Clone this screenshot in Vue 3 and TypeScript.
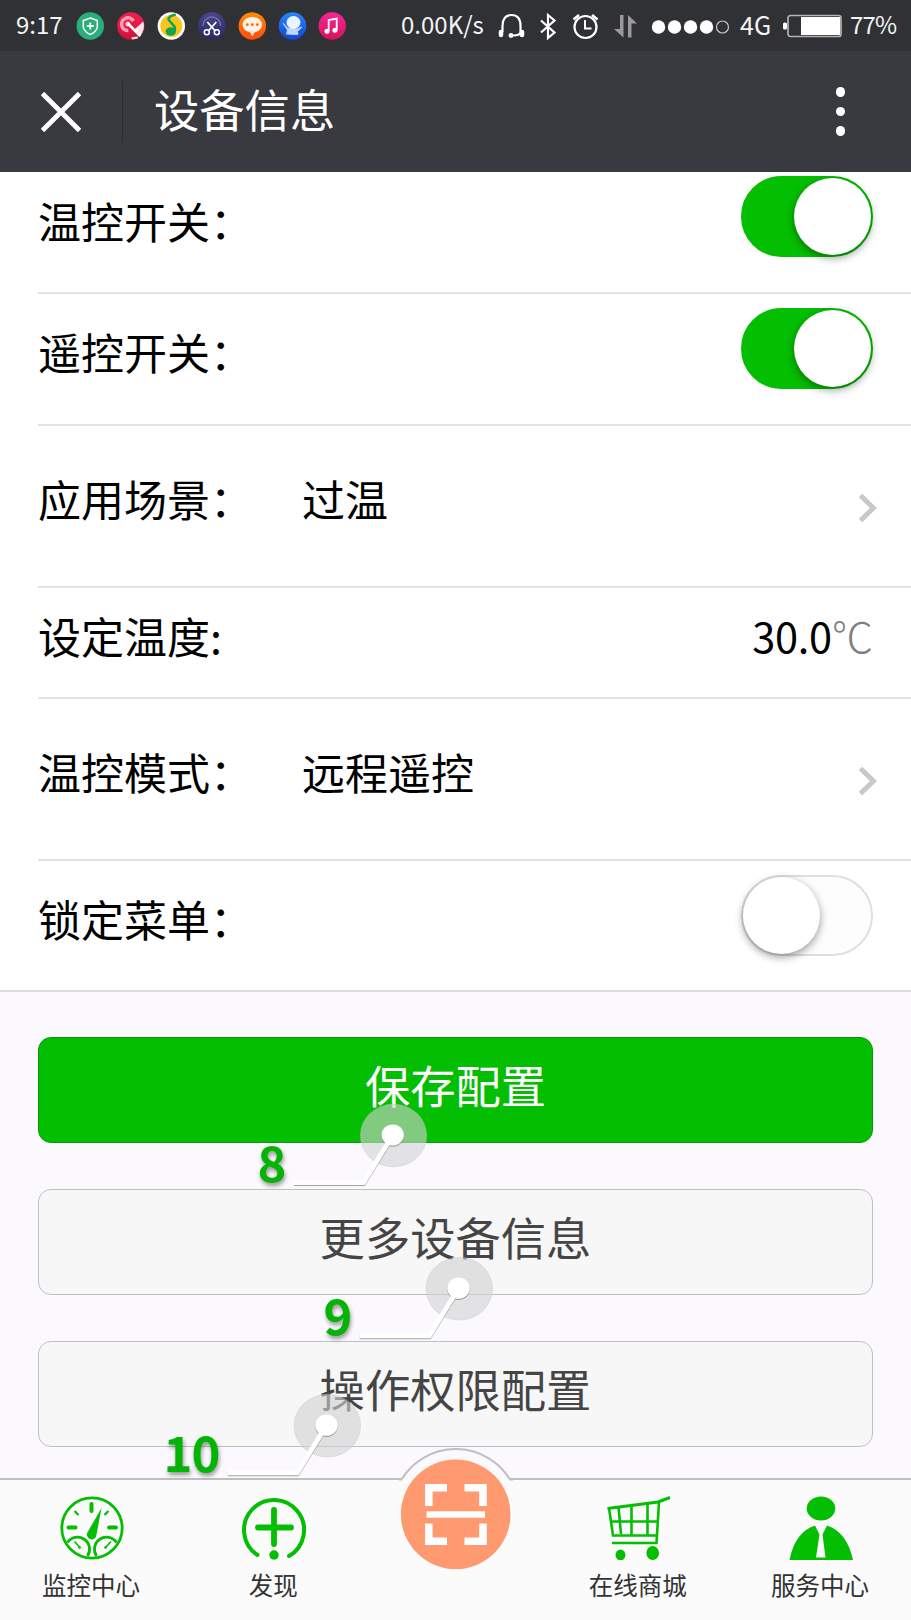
<script setup lang="ts">
import { ref } from 'vue'

interface Row {
  label: string
  height: number
  kind: 'toggle' | 'link' | 'temp'
  value?: string
  on?: boolean
}

const rows = ref<Row[]>([
  { label: '温控开关：', height: 122, kind: 'toggle', on: true },
  { label: '遥控开关：', height: 132, kind: 'toggle', on: true },
  { label: '应用场景：', height: 162, kind: 'link', value: '过温' },
  { label: '设定温度:', height: 111, kind: 'temp', value: '30.0' },
  { label: '温控模式：', height: 162, kind: 'link', value: '远程遥控' },
  { label: '锁定菜单：', height: 129, kind: 'toggle', on: false },
])

const buttons = [
  { text: '保存配置', primary: true },
  { text: '更多设备信息', primary: false },
  { text: '操作权限配置', primary: false },
]

const callouts = [
  { n: '8', x: 393.5, y: 1135.5 },
  { n: '9', x: 459.3, y: 1288.7 },
  { n: '10', x: 327.3, y: 1425.7 },
]

function toggle(row: Row) {
  row.on = !row.on
}
</script>

<template>
  <div class="screen">
    <div class="status">
      <span class="time">9:17</span>
      <svg class="apps" width="270" height="28" viewBox="0 0 270 28">
        <defs>
          <linearGradient id="gRed" x1="0" y1="0" x2="0" y2="1"><stop offset="0" stop-color="#f01f54" /><stop offset="1" stop-color="#cf1238" /></linearGradient>
          <linearGradient id="gOrange" x1="0" y1="0" x2="0" y2="1"><stop offset="0" stop-color="#ff8a0c" /><stop offset="1" stop-color="#ff4d0a" /></linearGradient>
          <linearGradient id="gBlue" x1="0" y1="0" x2="0" y2="1"><stop offset="0" stop-color="#2388ff" /><stop offset="1" stop-color="#1444d6" /></linearGradient>
          <linearGradient id="gPink" x1="0" y1="0" x2="0" y2="1"><stop offset="0" stop-color="#fb2596" /><stop offset="1" stop-color="#d3145c" /></linearGradient>
          <linearGradient id="gNavy" x1="0" y1="0" x2="0" y2="1"><stop offset="0" stop-color="#4a4690" /><stop offset="1" stop-color="#2a2760" /></linearGradient>
        </defs>
        <g transform="translate(14.3 14)">
          <circle r="13.7" fill="#2aaf7b" />
          <path d="M0-8 7-5.500V1Q6.500 5.500 0 8.500-6.500 5.500-7 1V-5.500Z" fill="none" stroke="#fff" stroke-width="1.500" />
          <path d="M-3.500 0H3.500M0-3.500V3.500" stroke="#fff" stroke-width="1.800" />
        </g>
        <g transform="translate(54.8 14)">
          <circle r="13.7" fill="url(#gRed)" />
          <path d="M-2.500 4.500A6.300 6.300 0 1 1 2.500-5" fill="none" stroke="#ff9bb0" stroke-width="3.600" />
          <circle cx="-3" cy="-2" r="2.500" fill="#ffc3cf" />
          <path d="M3.500 3.500 12.500-4.500Q15 3 9 10.500Z" fill="#ffe4e9" />
          <path d="M-3-2.500 9.500 10" stroke="#fff" stroke-width="2.600" />
          <path d="M1 12.300 7 11.500" stroke="#ffdbe2" stroke-width="2.200" />
        </g>
        <g transform="translate(95.3 14)">
          <circle r="13.7" fill="#fff" />
          <circle r="11" fill="#fdc41c" />
          <ellipse cx="-.5" cy="5.500" rx="5.200" ry="4.200" fill="#12a34c" />
          <path d="M3.500 5V1L-2.500-6Q-3.500-10 4.500-11.500" fill="none" stroke="#12a34c" stroke-width="2.600" />
        </g>
        <g transform="translate(135.8 14)">
          <circle r="13.7" fill="url(#gNavy)" />
          <path d="M-9 0A9 9 0 0 1 9 0" fill="none" stroke="#76739f" stroke-width="1.400" />
          <path d="M-4.500-4 3.500 5M4.500-4-3.500 5" stroke="#fff" stroke-width="1.800" />
          <circle cx="-5" cy="6.300" r="2.500" fill="none" stroke="#fff" stroke-width="1.500" />
          <circle cx="5" cy="6.300" r="2.500" fill="none" stroke="#fff" stroke-width="1.500" />
        </g>
        <g transform="translate(176.3 14)">
          <circle r="13.7" fill="url(#gOrange)" />
          <ellipse cy="-1.300" rx="9.700" ry="7.800" fill="#fff1e6" />
          <path d="M-3 5H3L0 10.500Z" fill="#ffe0cc" />
          <circle cx="-5" cy="-1.300" r="1.400" fill="#ff6a0c" /><circle cy="-1.300" r="1.400" fill="#ff6a0c" /><circle cx="5" cy="-1.300" r="1.400" fill="#ff6a0c" />
        </g>
        <g transform="translate(216.500 14)">
          <circle r="13.7" fill="url(#gBlue)" />
          <path d="M-9.500-3-5 2 4 3 9.500 1 5 5.500 5.500 8.500-6 8-5 4Z" fill="#bcd7fb" stroke="#bcd7fb" />
          <ellipse cx="1" cy="-3.500" rx="7" ry="6.500" fill="#eaf4ff" />
        </g>
        <g transform="translate(256.200 14)">
          <circle r="13.7" fill="url(#gPink)" />
          <path d="M-3.500 5V-6L4.500-7.500V4" fill="none" stroke="#fff" stroke-width="1.800" />
          <circle cx="-5.200" cy="5.300" r="2.500" fill="#fff" /><circle cx="2.700" cy="4.300" r="2.500" fill="#fff" />
        </g>
      </svg>
      <span class="speed">0.00K/s</span>
      <svg class="sys" width="242" height="28" viewBox="498 11 242 28">
        <g fill="none" stroke="#fff">
          <path d="M502.500 31V25Q502.500 14 511.500 14T520.500 25V31Q520.500 34.500 513 34.500" stroke-width="2.200" />
          <path d="M501 31V34M522 31V34" stroke-width="4.500" stroke-linecap="round" />
          <path d="M541 19.500 554.500 31.500 548 37V14L554.500 19.500 541 31.500" stroke-width="2.200" />
          <circle cx="585.500" cy="26" r="11" stroke-width="2.200" />
          <path d="M585 19V27.500H591.500" stroke-width="2" />
          <path d="M573.500 18.500 579 14M597.500 18.500 592 14" stroke-width="2.600" />
        </g>
        <circle cx="511" cy="34.500" r="2.400" fill="#fff" />
        <path d="M620 14H623.500V36.500L614 28H620ZM628 36.500H631.500V22.500H637L628 14Z" fill="#9a9a9c" />
        <g fill="#fff"><circle cx="658.500" cy="26" r="6.700" /><circle cx="674.500" cy="26" r="6.700" /><circle cx="690.500" cy="26" r="6.700" /><circle cx="706.500" cy="26" r="6.700" /></g>
        <circle cx="722.500" cy="26" r="6" fill="none" stroke="#c8c8c8" stroke-width="1.200" />
      </svg>
      <span class="net">4G</span>
      <svg class="battery" width="60" height="24" viewBox="0 0 60 24">
        <rect x="0" y="8.500" width="4" height="7" rx="1.500" fill="#fff" />
        <rect x="5" y="1.500" width="53" height="21" rx="2.500" fill="none" stroke="#b4b5b0" stroke-width="1.700" />
        <rect x="18" y="3" width="39" height="18" fill="#fff" />
      </svg>
      <span class="pct">77%</span>
    </div>

    <header class="header">
      <svg class="close" width="40" height="40" viewBox="0 0 40 40"><path d="M1.500 1.500 38.500 38.500M38.500 1.500 1.500 38.500" stroke="#fff" stroke-width="4.800" /></svg>
      <i class="sep"></i>
      <h1 class="title">设备信息</h1>
      <span class="more"><i></i><i></i><i></i></span>
    </header>

    <section class="list">
      <div v-for="row in rows" :key="row.label" class="row" :class="row.kind" :style="{ height: row.height + 'px' }">
        <span class="label">{{ row.label }}</span>
        <span v-if="row.kind === 'link'" class="value">{{ row.value }}</span>
        <svg v-if="row.kind === 'link'" class="arrow" width="18" height="28" viewBox="0 0 18 28"><path d="M1.500 1.500 14.500 14 1.500 26.500" fill="none" stroke="#c8c8cd" stroke-width="4.900" /></svg>
        <span v-if="row.kind === 'temp'" class="temp-value">{{ row.value }}<em>℃</em></span>
        <button v-if="row.kind === 'toggle'" class="switch" :class="{ on: row.on }" @click="toggle(row)"><i></i></button>
      </div>
    </section>

    <main class="actions">
      <button v-for="b in buttons" :key="b.text" class="btn" :class="{ primary: b.primary }">{{ b.text }}</button>
    </main>

    <nav class="tabs">
      <div class="tab">
        <svg width="64" height="64" viewBox="0 0 64 64" fill="none" stroke="#04be02">
          <circle cx="32" cy="32" r="30.200" stroke-width="2.800" />
          <path d="M31.500 8V15M8.500 31.500H15.500M49 31.500H56" stroke-width="4" stroke-linecap="round" />
          <path d="M14.500 15 18.500 19M48.500 15 44.500 19" stroke-width="2.300" />
          <path d="M41.500 12 36.500 38.500A4.800 4.800 0 1 1 28 35.500Z" fill="#04be02" stroke="none" />
          <path d="M7.500 46.500A11.500 11.500 0 1 1 27.500 60M56.500 46.500A11.500 11.500 0 1 0 36.500 60" stroke-width="2.800" />
          <path d="M14.500 45.500 20.500 52M51 45.500 45 52" stroke-width="1.700" />
          <circle cx="19.500" cy="51.500" r="1" /><circle cx="45.500" cy="51.500" r="1" />
        </svg>
        <span>监控中心</span>
      </div>
      <div class="tab">
        <svg width="64" height="64" viewBox="0 0 64 64" fill="none" stroke="#04be02" stroke-linecap="round">
          <path d="M15.500 59A30 30 0 1 1 47 60" stroke-width="4" />
          <path d="M32 14V48M16 31.500H49" stroke-width="5.800" />
          <circle cx="32" cy="59" r="4.700" fill="#04be02" stroke="none" />
        </svg>
        <span>发现</span>
      </div>
      <div class="tab scan">
        <svg width="130" height="126" viewBox="391 1446 130 126">
          <path d="M401.500 1481A63.500 63.500 0 0 1 510 1481V1485H401.500Z" fill="#fbf9fe" />
          <path d="M399 1479.500H401.500A63.600 63.600 0 0 1 510 1479.500H513" fill="none" stroke="#bfbfbf" stroke-width="2" />
          <path d="M402.500 1479H509V1483H402.500Z" fill="#fff" />
          <circle cx="455.700" cy="1514.300" r="54.800" fill="#ff9a70" />
          <g fill="none" stroke="#fff" stroke-width="7.600">
            <path d="M428.800 1506V1487.800H447M464.500 1487.800H483V1506M428.800 1523.500V1541.200H447M464.500 1541.200H483V1523.500" />
            <path d="M426.500 1514.500H485" stroke-width="6.500" />
          </g>
        </svg>
      </div>
      <div class="tab">
        <svg width="64" height="64" viewBox="0 0 64 64" fill="none" stroke="#04be02">
          <path d="M.500 12.500 51 6 63 1.500" stroke-width="3" />
          <path d="M2 12 6 39.500H50M3 25.500H51" stroke-width="2.600" />
          <path d="M11.500 11 14 38M24.500 10V39M40.500 8V39M52 6 49.500 47H5" stroke-width="2.600" />
          <ellipse cx="13.500" cy="59" rx="5" ry="5.400" fill="#04be02" stroke="none" />
          <ellipse cx="45.700" cy="57" rx="6.300" ry="7" fill="#04be02" stroke="none" />
        </svg>
        <span>在线商城</span>
      </div>
      <div class="tab">
        <svg width="64" height="64" viewBox="0 0 64 64" fill="#04be02">
          <ellipse cx="32" cy="12.500" rx="14.300" ry="12" />
          <path d="M.500 64Q6 36 26 29.500L30.500 38.500 27 61.500H36.500L33.500 38.500 38 29.500Q58 36 64 64Z" />
        </svg>
        <span>服务中心</span>
      </div>
    </nav>

    <svg class="callouts" width="911" height="1620" viewBox="0 0 911 1620">
      <g v-for="c in callouts" :key="c.n" :transform="`translate(${c.x} ${c.y})`">
        <ellipse class="halo" rx="33.300" ry="31.400" />
        <g class="pointer">
          <path d="M-99.500 47H-30L-1 0" />
          <ellipse cx="-.8" cy="-.5" rx="11.200" ry="10.600" />
        </g>
        <text class="num" x="-108" y="46.500" text-anchor="end">{{ c.n }}</text>
      </g>
    </svg>
  </div>
</template>

<style>
body {
  margin: 0;
  background: #fbf9fe;
}
</style>

<style scoped>
* {
  box-sizing: border-box;
}
.screen {
  position: relative;
  display: flex;
  flex-direction: column;
  width: 911px;
  height: 1620px;
  overflow: hidden;
  background: #fbf9fe;
  font-family: KaiTi, STKaiti, "AR PL UKai CN", "Noto Sans CJK SC", sans-serif;
}
.status {
  display: flex;
  align-items: center;
  flex: none;
  height: 51px;
  padding-left: 16px;
  background: #303135;
  color: #f4f4f4;
  font: 24px/46px "Noto Sans CJK SC", sans-serif;
  white-space: nowrap;
}
.status span {
  padding-bottom: 4px;
}
.time {
  width: 60px;
}
.apps {
  flex: none;
}
.speed {
  width: 83px;
  margin-left: 55px;
}
.sys {
  flex: none;
  margin-left: 14px;
}
.net {
  width: 43px;
  font-size: 25px;
}
.battery {
  flex: none;
}
.pct {
  margin-left: 7px;
  letter-spacing: -0.800px;
}
.header {
  display: flex;
  align-items: center;
  flex: none;
  height: 121px;
  padding: 0 66px 0 41px;
  background: #393a3f;
}
.sep {
  width: 1px;
  height: 61px;
  margin: 0 31px 0 41px;
  background: #2b2c30;
}
.title {
  margin: 0;
  color: #fff;
  font-size: 45.300px;
  font-weight: 400;
  line-height: 60px;
  transform: translateY(-4px);
}
.more {
  display: flex;
  flex-direction: column;
  gap: 10px;
  margin-left: auto;
}
.more i {
  width: 9.500px;
  height: 9.500px;
  border-radius: 50%;
  background: #fff;
}
.list {
  flex: none;
  background: #fff;
  border-bottom: 2px solid #dcdcdf;
}
.row {
  display: flex;
  margin-left: 38px;
  padding-right: 38px;
  border-bottom: 2px solid #e2e2e2;
  color: #000;
  font-size: 43px;
  line-height: 60px;
  white-space: nowrap;
}
.row:last-child {
  border-bottom: 0;
}
.label {
  width: 264px;
  padding-top: 27px;
}
.row:first-child .label {
  padding-top: 18px;
}
.row.link .label,
.value {
  padding-top: 42px;
}
.row.temp .label {
  padding-top: 17px;
}
.arrow {
  margin: 68px -4px 0 auto;
}
.temp-value {
  margin: 17px 0 0 auto;
  font-family: "Noto Sans CJK SC", sans-serif;
  font-size: 41.500px;
  letter-spacing: -0.300px;
}
.temp-value em {
  color: #808080;
  font-style: normal;
  font-weight: 300;
}
.switch {
  width: 132px;
  height: 81px;
  margin: 14px 0 0 auto;
  padding: 0;
  border: 2px solid #dfdfdf;
  border-radius: 41px;
  background: #fdfdfd;
}
.row:first-child .switch {
  margin-top: 4px;
}
.switch i {
  display: block;
  width: 77px;
  height: 77px;
  border-radius: 50%;
  background: #fff;
  box-shadow: 0 3px 8px rgba(0, 0, 0, 0.4);
}
.switch.on {
  border-color: #04be02;
  background: #04be02;
}
.switch.on i {
  margin-left: 51px;
}
.actions {
  display: flex;
  flex-direction: column;
  flex: 1;
  gap: 46px;
  padding: 45px 38px 0;
}
.btn {
  flex: none;
  height: 106px;
  padding: 0 0 12px;
  border: 1px solid #bfbfbf;
  border-radius: 13px;
  background: #f7f7f7;
  color: #454545;
  font-family: inherit;
  font-size: 45.300px;
}
.btn.primary {
  border-color: #049803;
  background: #04be02;
  color: #fff;
}
.tabs {
  display: grid;
  grid-template-columns: repeat(5, 1fr);
  flex: none;
  height: 142px;
  border-top: 2px solid #bfbfbf;
  background: #fbfbfb;
}
.tab {
  display: flex;
  flex-direction: column;
  align-items: center;
  padding: 16px 0 0 2px;
  color: #333;
  font-size: 24.500px;
  line-height: 32px;
}
.tab span {
  margin: 9px 2px 0 0;
}
.tab.scan {
  padding: 0 0 0 1px;
}
.scan svg {
  flex: none;
  margin-top: -34px;
}
.callouts {
  position: absolute;
  top: 0;
  left: 0;
  pointer-events: none;
}
.halo {
  fill: rgba(210, 210, 210, 0.61);
  stroke: rgba(180, 180, 180, 0.25);
}
.pointer {
  filter: drop-shadow(0.500px 1.200px 0.500px rgba(0, 0, 0, 0.35));
}
.pointer path {
  fill: none;
  stroke: #fff;
  stroke-width: 5;
}
.pointer ellipse {
  fill: #fff;
}
.num {
  fill: #04b404;
  font: 700 49px "Noto Sans CJK SC", sans-serif;
  letter-spacing: -1px;
  filter: drop-shadow(1px 3px 2px rgba(0, 0, 0, 0.4));
}
</style>
